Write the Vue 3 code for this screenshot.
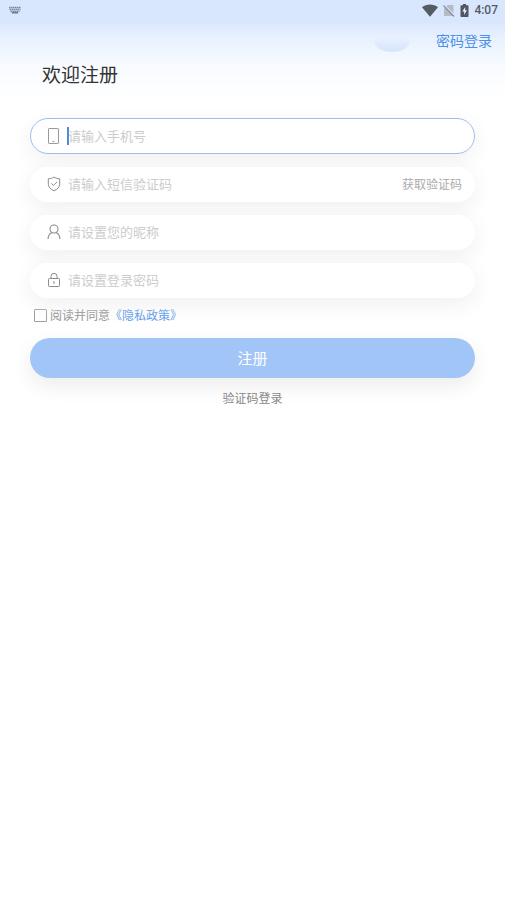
<script setup>
import { ref } from 'vue'

const phone = ref('')
const code = ref('')
const nickname = ref('')
const password = ref('')
const agreed = ref(false)
</script>

<template>
  <div class="page">
    <header class="top">
      <div class="status">
        <svg class="keyboard" width="12" height="8" viewBox="0 0 12 8" aria-hidden="true">
          <path d="M0 1.500h12M.5 3.500h11M1.500 5.500h9" stroke="#7a8596" stroke-width="1.500" stroke-dasharray="1.500 .5" fill="none" />
          <path d="M3 6.800h6" stroke="#59606c" stroke-width="1.200" />
        </svg>
        <div class="status-right">
          <svg width="16" height="13" viewBox="0 0 16 13" aria-hidden="true">
            <path d="M0 3.200C4.600-.4 11.400-.4 16 3.200L8 12.800z" fill="#555b64" />
          </svg>
          <svg width="12" height="13" viewBox="0 0 12 13" aria-hidden="true">
            <path d="M4.500 1H10.500v11H1V4.500z" fill="#b4bbc6" />
            <path d="M.8.5 12 11.700" stroke="#dbe8fd" stroke-width="1.200" />
            <path d="M.5 1.500 11 12.500" stroke="#8b929d" stroke-width="1.200" />
          </svg>
          <svg width="9" height="13" viewBox="0 0 9 13" aria-hidden="true">
            <path d="M3 0h3v1.300h1.800q.7 0 .7.7v10.300q0 .7-.7.7H1.200q-.7 0-.7-.7V2q0-.7.7-.7H3z" fill="#50565f" />
            <path d="M5.200 3 2.300 7.500h1.900V11l2.700-4.700H5.200z" fill="#e6effc" />
          </svg>
          <span class="time">4:07</span>
        </div>
      </div>
      <nav class="nav">
        <svg class="cloud" width="36" height="22" viewBox="0 0 36 22" aria-hidden="true">
          <defs>
            <linearGradient id="orb" x1="0" y1="0" x2="0" y2="1">
              <stop offset=".2" stop-color="#e4eefe" stop-opacity="0" />
              <stop offset=".6" stop-color="#e1ecfd" />
              <stop offset="1" stop-color="#d6e4fb" />
            </linearGradient>
          </defs>
          <ellipse cx="18" cy="11" rx="18" ry="11" fill="url(#orb)" />
        </svg>
        <a class="switch" href="#password">密码登录</a>
      </nav>
      <h1 class="title">欢迎注册</h1>
    </header>

    <form class="form" @submit.prevent>
      <div class="fields">
        <label class="field field-active">
          <svg width="14" height="18" viewBox="0 0 14 18" fill="none" stroke="#999" aria-hidden="true">
            <rect x="1.500" y="1.500" width="10" height="15" rx=".6" />
            <path d="M5.500 14.500h2" />
          </svg>
          <span class="entry">
            <input v-model="phone" type="tel" placeholder="请输入手机号" aria-label="手机号" />
            <span v-if="!phone" class="caret"></span>
          </span>
        </label>
        <div class="field">
          <svg width="14" height="18" viewBox="0 0 14 18" fill="none" stroke="#8c8c8c" aria-hidden="true">
            <path d="M7 2C5.500 3.200 3.500 3.600 1.300 3.800v5.400C1.300 12.200 4 14.600 7 15.800c3-1.200 5.700-3.600 5.700-6.600V3.800C10.500 3.600 8.500 3.200 7 2z" stroke-linejoin="round" />
            <path d="m4.300 8.400 2.200 2 3.600-3.500" />
          </svg>
          <span class="entry">
            <input v-model="code" type="text" placeholder="请输入短信验证码" aria-label="短信验证码" />
          </span>
          <button class="get-code" type="button">获取验证码</button>
        </div>
        <label class="field">
          <svg width="14" height="18" viewBox="0 0 14 18" fill="none" stroke="#8c8c8c" stroke-width="1.100" aria-hidden="true">
            <circle cx="7" cy="6" r="4" />
            <path d="M1 16c.2-3.400 1.800-5.500 4-6.500M13 16c-.2-3.400-1.800-5.500-4-6.500" />
          </svg>
          <span class="entry">
            <input v-model="nickname" type="text" placeholder="请设置您的昵称" aria-label="昵称" />
          </span>
        </label>
        <label class="field">
          <svg width="14" height="18" viewBox="0 0 14 18" fill="none" stroke="#8c8c8c" aria-hidden="true">
            <rect x="1.500" y="7.500" width="11" height="8" rx=".8" />
            <path d="M4 7.500V5.300a3 3 0 0 1 6 0v2.200M7 10v3" />
          </svg>
          <span class="entry">
            <input v-model="password" type="password" placeholder="请设置登录密码" aria-label="登录密码" />
          </span>
        </label>
      </div>

      <div class="terms">
        <input id="agree" v-model="agreed" type="checkbox" />
        <label for="agree">阅读并同意</label>
        <a href="#privacy">《隐私政策》</a>
      </div>

      <button class="submit" type="submit">注册</button>
      <a class="code-login" href="#code">验证码登录</a>
    </form>
  </div>
</template>

<style>
body {
  background: #fff;
}
</style>

<style scoped>
.page,
.page input,
.page button {
  font-family: "Noto Sans CJK SC", sans-serif;
}

.page {
  min-height: 100vh;
  background: linear-gradient(#d9e7fe 0, #d9e7fe 22px, #e8f1fe 38px, #f7faff 64px, #fff 96px);
}

a {
  text-decoration: none;
}

.status {
  display: flex;
  justify-content: space-between;
  align-items: center;
  height: 20px;
  padding: 0 7px 0 9px;
}

.status-right {
  display: flex;
  align-items: center;
  gap: 5px;
}

.time {
  font: 500 12px/20px Roboto, sans-serif;
  color: #555b64;
}

.nav {
  display: flex;
  justify-content: flex-end;
  align-items: center;
  gap: 26px;
  height: 40px;
  padding-right: 13px;
}

.cloud {
  margin-top: 2px;
}

.switch {
  font-size: 14px;
  line-height: 20px;
  color: #4a90ea;
}

.title {
  margin: 0;
  padding-left: 42px;
  font-size: 19px;
  line-height: 28px;
  font-weight: 400;
  color: #333;
}

.form {
  display: flex;
  flex-direction: column;
  padding: 30px 30px 0;
}

.fields {
  display: flex;
  flex-direction: column;
  gap: 13px;
  isolation: isolate;
}

.field {
  position: relative;
  display: flex;
  align-items: center;
  gap: 7px;
  box-sizing: border-box;
  height: 35px;
  padding: 0 13px 1px 17px;
  border-radius: 18px;
  background: #fff;
}

.field::before {
  content: "";
  position: absolute;
  inset: 0;
  z-index: -1;
  border-radius: 18px;
  box-shadow: 0 6px 22px 1px #f0f0f0;
}

.field-active {
  height: 36px;
  padding: 0 12px 0 16px;
  border: 1px solid #9fbdea;
}

.entry {
  position: relative;
  display: flex;
  flex: 1;
  min-width: 0;
}

.entry input {
  box-sizing: border-box;
  width: 100%;
  height: 20px;
  padding: 0 0 2px;
  border: 0;
  outline: 0;
  background: transparent;
  font-size: 13px;
  color: #333;
}

.entry input::placeholder {
  color: #ccc;
}

.caret {
  position: absolute;
  top: 1px;
  left: -1px;
  width: 2px;
  height: 18px;
  background: #4a8fd4;
}

button {
  border: 0;
  cursor: pointer;
}

.get-code {
  padding: 0;
  background: none;
  font-size: 12px;
  line-height: 20px;
  color: #aaa;
}

.terms {
  display: flex;
  align-items: center;
  margin-top: 7px;
  padding-left: 4px;
  font-size: 12px;
  line-height: 20px;
  color: #888;
}

.terms input {
  appearance: none;
  box-sizing: border-box;
  width: 13px;
  height: 13px;
  margin: 0 3px 0 0;
  border: 1px solid #999;
  border-radius: 1px;
  background: #fff;
}

.terms input:checked {
  background: #4a90ea;
}

.terms a {
  color: #4a90ea;
}

.submit {
  height: 40px;
  margin-top: 13px;
  padding: 0 0 2px;
  border-radius: 20px;
  background: #a2c5f8;
  box-shadow: 0 8px 20px 1px #eee;
  font-size: 15px;
  color: #fff;
}

.code-login {
  align-self: center;
  margin-top: 10px;
  font-size: 12px;
  line-height: 20px;
  color: #888;
}
</style>
